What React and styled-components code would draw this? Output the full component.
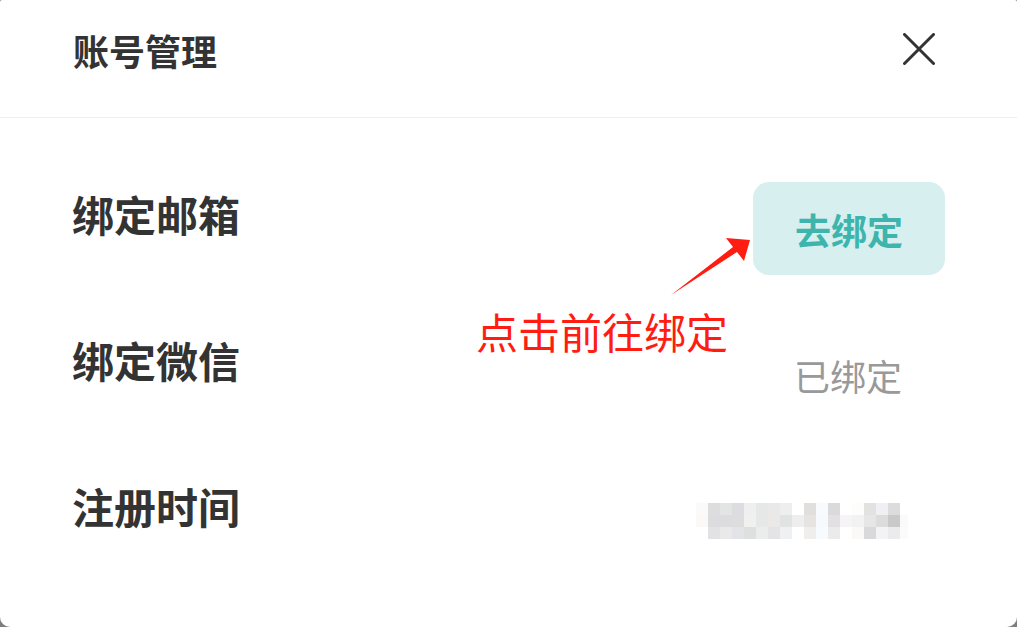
import React from "react";
import styled, { createGlobalStyle } from "styled-components";

const Global = createGlobalStyle`
  html, body { margin: 0; padding: 0; background: #7f7f7f; }
  body { font-family: "Noto Sans CJK SC", "Noto Sans", sans-serif; }
  * { box-sizing: border-box; }
`;

const Dialog = styled.div`
  position: relative;
  width: 1017px;
  height: 627px;
  background: #ffffff;
  border-radius: 2px 2px 10px 10px;
  overflow: hidden;
`;

const Header = styled.div`
  height: 118px;
  display: flex;
  justify-content: space-between;
  align-items: flex-start;
  padding: 32px 82px 0 73px;
  border-bottom: 1px solid #efefef;
`;

const Title = styled.div`
  font-size: 36px;
  line-height: 1;
  font-weight: 700;
  color: #333333;
`;

const CloseButton = styled.button`
  width: 32px;
  height: 32px;
  margin-top: 1px;
  padding: 0;
  border: none;
  background: transparent;
  display: flex;
  cursor: pointer;
`;

const Body = styled.div`
  display: flex;
  flex-direction: column;
  gap: 53px;
  padding: 64px 72px 0 72px;
`;

const Row = styled.div`
  height: 93px;
  display: flex;
  justify-content: space-between;
  align-items: flex-start;
`;

const Label = styled.div`
  margin-top: 11px;
  font-size: 42px;
  line-height: 1;
  font-weight: 700;
  color: #333333;
`;

const Value = styled.div`
  width: 192px;
  height: 93px;
  display: flex;
  align-items: center;
  justify-content: flex-end;
  padding-right: ${(p) => p.$inset ?? 43}px;
  font-size: 36px;
  line-height: 1;
  color: #999999;
`;

const BindButton = styled.button`
  width: 192px;
  height: 93px;
  border: none;
  border-radius: 16px;
  background: #d7efef;
  color: #3db5ad;
  font-family: inherit;
  font-size: 36px;
  line-height: 1;
  font-weight: 700;
  padding: 0;
  cursor: pointer;
`;

const Blur = styled.div`
  display: grid;
  grid-template-columns: repeat(17, 12px) 8px;
  grid-auto-rows: 12px;
`;

const Cell = styled.span`
  background: ${(p) => p.$c};
`;

const Note = styled.div`
  position: absolute;
  left: 476px;
  top: 310px;
  font-size: 42px;
  line-height: 1;
  color: #ff1d12;
`;

const Arrow = styled.svg`
  position: absolute;
  left: 660px;
  top: 225px;
`;

const blurRows = [
  ["#fbfaf8", "#dddddd", "#e3e5e4", "#dcdde0", "#efefef", "#e6e8e8", "#ebe9e8", "#eceef0", "#ffffff", "#e0dfdd", "#f8fbfd", "#dadadb", "#ffffff", "#fdfdfb", "#e4e2e1", "#eef0f3", "#dcdcdc", "#ffffff"],
  ["#faf9f8", "#dcdcde", "#dcdce0", "#dddddd", "#f0f0ee", "#e6e8e8", "#ebe9e8", "#e1e3e3", "#eeeeee", "#e7e3e0", "#f7fafd", "#e2e0e2", "#f5f5f5", "#f2f2f2", "#e6e6e6", "#dcdcdc", "#c9c9c9", "#fafafa"],
  ["#ffffff", "#e2e2e4", "#e9e9ea", "#e3e4e8", "#dfdfdf", "#ebedec", "#e4e4e6", "#eef0f2", "#ffffff", "#f0eeec", "#f8fbfd", "#ebebeb", "#ffffff", "#faf9f8", "#d9d9dc", "#f3f3f5", "#ebebeb", "#fbfbfb"],
];

export default function App() {
  return (
    <>
      <Global />
      <Dialog>
        <Header>
          <Title>账号管理</Title>
          <CloseButton aria-label="关闭">
            <svg width="32" height="32" viewBox="0 0 32 32">
              <path d="M1.5 1.5 L30.5 30.5 M30.5 1.5 L1.5 30.5" stroke="#333333" strokeWidth="3" strokeLinecap="round" fill="none" />
            </svg>
          </CloseButton>
        </Header>
        <Body>
          <Row>
            <Label>绑定邮箱</Label>
            <BindButton>去绑定</BindButton>
          </Row>
          <Row>
            <Label>绑定微信</Label>
            <Value>已绑定</Value>
          </Row>
          <Row>
            <Label>注册时间</Label>
            <Value $inset={37}>
              <Blur>
                {blurRows.flatMap((r, i) => r.map((c, j) => <Cell key={`${i}-${j}`} $c={c} />))}
              </Blur>
            </Value>
          </Row>
        </Body>
        <Note>点击前往绑定</Note>
        <Arrow width="100" height="80" viewBox="0 0 100 80">
          <polygon points="11,70 73,22 66,13 90,15 84,36 77,27" fill="#ff1d12" />
        </Arrow>
      </Dialog>
    </>
  );
}
